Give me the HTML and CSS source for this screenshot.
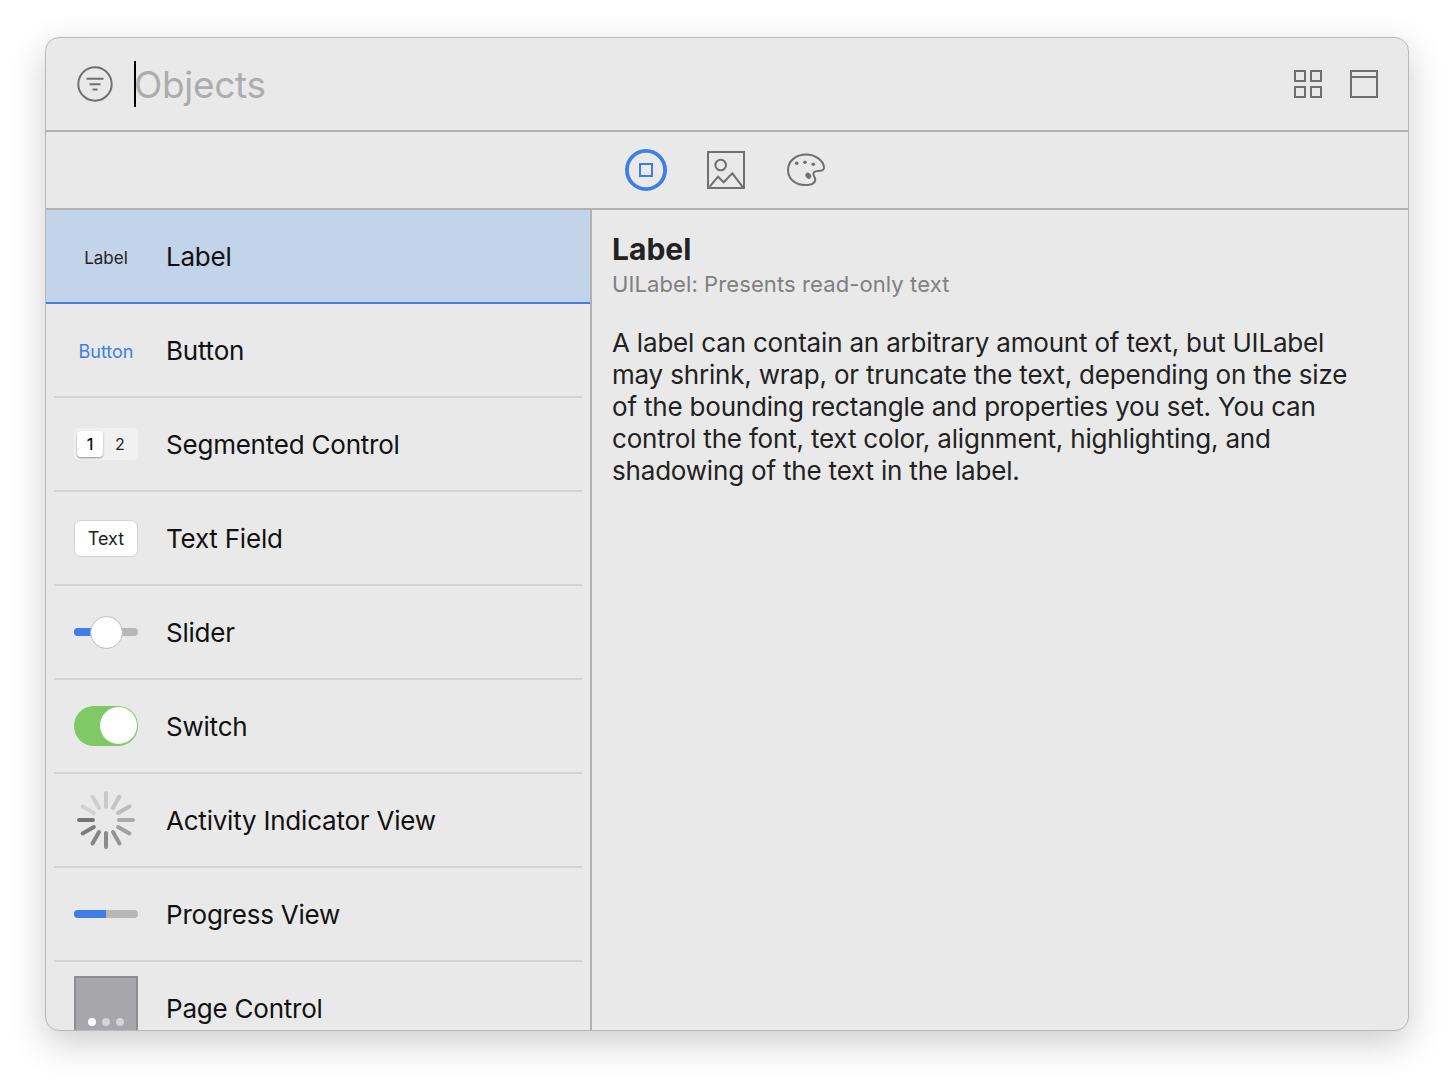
FILE: index.html
```html
<!DOCTYPE html>
<html lang="en">
<head>
    <meta charset="UTF-8">
    <title>Objects</title>
    <link rel="stylesheet" href="styles.css">
</head>
<body>
    <div class="window">
        <div class="search-bar">
            <svg class="filter-icon" width="36" height="36" viewBox="0 0 36 36" fill="none" stroke="#707070">
                <circle cx="18" cy="18" r="16.700" stroke-width="2"/>
                <path d="M9.500 12.700H26.500M12.500 18.200H23.500M15.500 23.500H20.500" stroke-width="2"/>
            </svg>
            <div class="caret"></div>
            <div class="search-text">Objects</div>
            <svg class="grid-icon" width="30" height="30" viewBox="0 0 30 30" fill="none" stroke="#6e6e6e" stroke-width="2">
                <rect x="2" y="2" width="10" height="10"/>
                <rect x="18" y="2" width="10" height="10"/>
                <rect x="2" y="18" width="10" height="10"/>
                <rect x="18" y="18" width="10" height="10"/>
            </svg>
            <svg class="window-icon" width="30" height="30" viewBox="0 0 30 30" fill="none" stroke="#6e6e6e" stroke-width="2">
                <rect x="1" y="2" width="26" height="26"/>
                <path d="M1 8H27"/>
            </svg>
        </div>

        <div class="tab-bar">
            <svg width="42" height="44" viewBox="1 0 42 44" fill="none" stroke="#3f7de8">
                <circle cx="22" cy="22" r="19.100" stroke-width="3.800"/>
                <rect x="16" y="16" width="12" height="12" stroke-width="2"/>
            </svg>
            <svg width="39" height="40" viewBox="1 0 39 40" fill="none" stroke="#707070" stroke-width="2">
                <rect x="2" y="2" width="36" height="36"/>
                <circle cx="14.700" cy="15" r="5.300"/>
                <path d="M3.700 36.700L12 26.700L17.700 32.300L26.300 23.300L37 37.300"/>
            </svg>
            <svg width="40" height="40" viewBox="0 0 40 40" fill="none" stroke="#707070" stroke-width="2">
                <path d="M2 20C2 11 10 4.500 20 4.500C29 4.500 37 10 38 17C38.500 20 36 21 32 21C28 21 26.500 23 28 26C31 31 28 34.500 22 35C11 36 2 30 2 20Z"/>
                <circle cx="10.700" cy="13.300" r="1.800" fill="#707070" stroke="none"/>
                <circle cx="19" cy="12.300" r="1.800" fill="#707070" stroke="none"/>
                <circle cx="27.300" cy="14.300" r="1.800" fill="#707070" stroke="none"/>
                <ellipse cx="22.300" cy="25.700" rx="2.600" ry="3.300" transform="rotate(-40 22.300 25.700)" fill="#707070" stroke="none"/>
            </svg>
        </div>

        <div class="content">
            <div class="object-list">
                <div class="row selected">
                    <div class="preview"><span class="mini-label">Label</span></div>
                    <div class="row-title">Label</div>
                </div>
                <div class="row">
                    <div class="preview"><span class="mini-label mini-button">Button</span></div>
                    <div class="row-title">Button</div>
                </div>
                <div class="row">
                    <div class="preview">
                        <div class="segmented">
                            <span class="segment active">1</span>
                            <span class="segment">2</span>
                        </div>
                    </div>
                    <div class="row-title">Segmented Control</div>
                </div>
                <div class="row">
                    <div class="preview"><div class="text-field">Text</div></div>
                    <div class="row-title">Text Field</div>
                </div>
                <div class="row">
                    <div class="preview">
                        <div class="track"><div class="track-fill"></div></div>
                        <div class="slider-knob"></div>
                    </div>
                    <div class="row-title">Slider</div>
                </div>
                <div class="row">
                    <div class="preview">
                        <div class="switch"><div class="switch-knob"></div></div>
                    </div>
                    <div class="row-title">Switch</div>
                </div>
                <div class="row">
                    <div class="preview">
                        <svg width="60" height="60" viewBox="0 0 60 60" fill="none" stroke-width="4" stroke-linecap="round">
                            <path d="M30 3V17" stroke="#c9c9c9"/>
                            <path d="M43.500 6.600L37 17.900" stroke="#c4c4c4"/>
                            <path d="M53.400 16.500L42.100 23" stroke="#bcbcbc"/>
                            <path d="M57 30H43" stroke="#a8a8a8"/>
                            <path d="M53.400 43.500L42.100 37" stroke="#a0a0a0"/>
                            <path d="M43.500 53.400L37 42.100" stroke="#949494"/>
                            <path d="M30 57V43" stroke="#8a8a8a"/>
                            <path d="M16.500 53.400L23 42.100" stroke="#858585"/>
                            <path d="M6.600 43.500L17.900 37" stroke="#7e7e7e"/>
                            <path d="M3 30H17" stroke="#757575"/>
                            <path d="M6.600 16.500L17.900 23" stroke="#d2d2d2"/>
                            <path d="M16.500 6.600L23 17.900" stroke="#cecece"/>
                        </svg>
                    </div>
                    <div class="row-title">Activity Indicator View</div>
                </div>
                <div class="row">
                    <div class="preview">
                        <div class="track"><div class="track-fill"></div></div>
                    </div>
                    <div class="row-title">Progress View</div>
                </div>
                <div class="row">
                    <div class="preview">
                        <div class="page-control">
                            <span class="dot current"></span>
                            <span class="dot"></span>
                            <span class="dot"></span>
                        </div>
                    </div>
                    <div class="row-title">Page Control</div>
                </div>
            </div>

            <div class="details">
                <div class="details-title">Label</div>
                <div class="details-subtitle">UILabel: Presents read-only text</div>
                <p class="details-text">A label can contain an arbitrary amount of text, but UILabel<br>may shrink, wrap, or truncate the text, depending on the size<br>of the bounding rectangle and properties you set. You can<br>control the font, text color, alignment, highlighting, and<br>shadowing of the text in the label.</p>
            </div>
        </div>
    </div>
</body>
</html>
```

FILE: styles.css
```css
html, body {
    margin: 0;
    padding: 0;
    height: 100%;
    background-color: #fff;
    font-family: Inter, "Liberation Sans", sans-serif;
    overflow: hidden;
}
body {
    padding: 37px 45px 0;
    box-sizing: border-box;
}
.window {
    width: 1364px;
    height: 994px;
    box-sizing: border-box;
    display: flex;
    flex-direction: column;
    overflow: hidden;
    background-color: #e9e9e9;
    border: 1px solid #b9b9b9;
    border-radius: 14px;
    box-shadow: 0 12px 36px rgba(0, 0, 0, 0.2);
}
.search-bar {
    height: 94px;
    flex: none;
    box-sizing: border-box;
    display: flex;
    align-items: center;
    padding: 0 28px 0 31px;
    border-bottom: 2px solid #b1b1b1;
}
.caret {
    width: 2px;
    height: 46px;
    margin-left: 21px;
    background-color: #000;
}
.search-text {
    flex: 1;
    margin-left: -2px;
    font-size: 37px;
    color: #adadad;
    letter-spacing: -0.300px;
}
.window-icon {
    margin-left: 27px;
}
.tab-bar {
    height: 78px;
    flex: none;
    box-sizing: border-box;
    display: flex;
    justify-content: center;
    align-items: center;
    gap: 40px;
    padding-right: 3px;
    border-bottom: 2px solid #b1b1b1;
}
.content {
    flex: 1;
    display: flex;
    min-height: 0;
}
.object-list {
    width: 546px;
    flex: none;
    box-sizing: border-box;
    border-right: 2px solid #b1b1b1;
}
.row {
    height: 94px;
    box-sizing: border-box;
    margin: 0 8px;
    padding-left: 20px;
    display: flex;
    align-items: center;
    border-bottom: 2px solid #d3d3d3;
}
.row.selected {
    margin: 0;
    padding-left: 28px;
    background-color: #c2d3ea;
    border-bottom-color: #3f7de8;
}
.row-title {
    margin-left: 28px;
    padding-top: 1px;
    font-size: 26px;
    letter-spacing: -0.220px;
    color: #111;
}
.preview {
    position: relative;
    width: 64px;
    height: 60px;
    flex: none;
    display: flex;
    justify-content: center;
    align-items: center;
}
.mini-label {
    padding-top: 3px;
    font-size: 17px;
    color: #222;
}
.mini-button {
    padding-top: 2px;
    font-size: 18px;
    color: #3f7de8;
}
.segmented {
    width: 64px;
    height: 32px;
    box-sizing: border-box;
    padding: 3px;
    display: flex;
    background-color: #f1f1f1;
    border-radius: 5px;
}
.segment {
    width: 26px;
    height: 26px;
    display: flex;
    justify-content: center;
    align-items: center;
    font-size: 16px;
    color: #222;
}
.segment.active {
    font-weight: 500;
    color: #111;
    background-color: #fff;
    border-radius: 4px;
    box-shadow: 0 1px 2px rgba(0, 0, 0, 0.4);
}
.segment + .segment {
    margin-left: 4px;
}
.text-field {
    width: 64px;
    height: 37px;
    box-sizing: border-box;
    display: flex;
    justify-content: center;
    align-items: center;
    font-size: 18px;
    color: #222;
    background-color: #fff;
    border: 1px solid #d4d4d4;
    border-radius: 7px;
}
.track {
    width: 64px;
    height: 8px;
    overflow: hidden;
    background-color: #b7b7b7;
    border-radius: 4px;
}
.track-fill {
    width: 50%;
    height: 100%;
    background-color: #3f7de8;
}
.slider-knob {
    position: absolute;
    top: 14px;
    left: 16px;
    width: 33px;
    height: 33px;
    box-sizing: border-box;
    background-color: #fff;
    border: 1px solid #bdbdbd;
    border-radius: 50%;
}
.switch {
    width: 64px;
    height: 40px;
    box-sizing: border-box;
    padding: 1px 1px 1px 26px;
    background-color: #7fc966;
    border-radius: 20px;
}
.switch-knob {
    width: 37px;
    height: 37px;
    background-color: #fff;
    border-radius: 50%;
}
.page-control {
    position: absolute;
    top: -2px;
    left: 0;
    width: 64px;
    height: 76px;
    box-sizing: border-box;
    padding-top: 40px;
    display: flex;
    justify-content: center;
    gap: 6px;
    background-color: #a7a6aa;
    border: 2px solid #8e8e92;
}
.dot {
    width: 8px;
    height: 8px;
    background-color: #d4d4d6;
    border-radius: 50%;
}
.dot.current {
    background-color: #fff;
}
.details {
    flex: 1;
    padding: 20px 20px 0 20px;
    color: #222;
}
.details-title {
    font-size: 30px;
    font-weight: 700;
    line-height: 38px;
}
.details-subtitle {
    margin-top: 1px;
    font-size: 22px;
    line-height: 30px;
    letter-spacing: 0.100px;
    color: #808080;
}
.details-text {
    margin: 28px 0 0;
    font-size: 26px;
    line-height: 32px;
    letter-spacing: -0.190px;
}
```
